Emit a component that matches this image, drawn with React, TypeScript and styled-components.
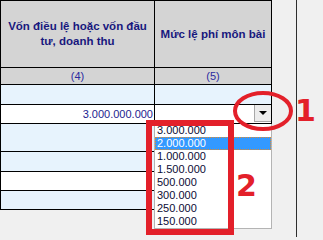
import React from 'react';
import styled, {createGlobalStyle} from 'styled-components';

const GlobalStyle = createGlobalStyle`
  html, body {
    margin: 0;
    padding: 0;
    background: #f0f0f0;
  }

  body {
    font-family: "Liberation Sans", Arial, sans-serif;
    font-size: 11px;
  }
`

const Screen = styled.div`
  position: relative;
  display: flex;
  align-items: flex-start;
  width: 323px;
  height: 237px;
  overflow: hidden;
  background: #f0f0f0;
`

const Sheet = styled.div`
  display: grid;
  grid-template-columns: 153px 116px;
  grid-template-rows: 66px 16px 19px 18px 27px 19px 18px 18px;
  gap: 1px;
  padding: 1px;
  background: #000000;
  flex: none;
`

const Gutter = styled.div`
  width: 24px;
  flex: none;
`

const Divider = styled.div`
  width: 1px;
  height: 237px;
  background: #2e2e2e;
  flex: none;
`

const HeaderCell = styled.div`
  display: flex;
  align-items: center;
  justify-content: center;
  padding: 0 2px;
  background: #d4d4d4;
  color: #18187e;
  font-weight: 700;
  font-size: 11.5px;
  line-height: 15px;
  text-align: center;
  white-space: nowrap;
`

const IndexCell = styled.div`
  display: flex;
  align-items: center;
  justify-content: center;
  background: #d4d4d4;
  color: #2b2ba0;
  font-size: 11px;
`

interface CellProps {
    $tone: 'blue' | 'white';
}

const DataCell = styled.div<CellProps>`
  position: relative;
  display: flex;
  align-items: center;
  justify-content: flex-end;
  padding-right: 1px;
  background: ${(props) => props.$tone === 'blue' ? '#e7f3fd' : '#ffffff'};
  color: #1d1d8f;
  font-size: 11px;
`

const ComboCell = styled(DataCell)`
  align-items: flex-start;
  padding-right: 0;
`

const ComboButton = styled.div`
  display: flex;
  align-items: center;
  justify-content: center;
  width: 16px;
  height: 16px;
  background: #ececec;
  border-left: 1px solid #a8a8a8;
  border-bottom: 1px solid #a8a8a8;
`

const DropList = styled.ul`
  position: absolute;
  top: calc(100% + 1px);
  left: -1px;
  right: -1px;
  margin: 0;
  padding: 0;
  list-style: none;
  background: #ffffff;
  border: 1px solid #b4b4b4;
  border-top: none;
  z-index: 2;
`

const DropItem = styled.li<{ $selected?: boolean }>`
  height: 13px;
  line-height: 13px;
  padding-left: 2px;
  font-size: 11px;
  color: ${(props) => props.$selected ? '#ffffff' : '#0c0c34'};
  background: ${(props) => props.$selected ? '#3399ff' : 'transparent'};
  outline: ${(props) => props.$selected ? '1px dotted #e08a2c' : 'none'};
  outline-offset: -1px;
`

const RingMark = styled.svg`
  position: absolute;
  left: 231px;
  top: 89px;
  z-index: 3;
`

const BoxMark = styled.div`
  position: absolute;
  left: 146px;
  top: 120px;
  width: 88px;
  height: 115px;
  box-sizing: border-box;
  border: 6px solid #e3202a;
  z-index: 3;
`

const Callout = styled.span<{ $left: number; $top: number }>`
  position: absolute;
  left: ${(props) => props.$left}px;
  top: ${(props) => props.$top}px;
  font-family: "DejaVu Sans", Verdana, sans-serif;
  font-weight: 700;
  font-size: 30px;
  line-height: 30px;
  color: #e3202a;
  z-index: 3;
`

const fees = ['3.000.000', '2.000.000', '1.000.000', '1.500.000', '500.000', '300.000', '250.000', '150.000'];

const rows: Array<'blue' | 'white'> = ['blue', 'blue', 'white', 'blue'];

function App() {
    return (
        <>
            <GlobalStyle/>
            <Screen>
                <Sheet>
                    <HeaderCell>Vốn điều lệ hoặc vốn đầu<br/>tư, doanh thu</HeaderCell>
                    <HeaderCell>Mức lệ phí môn bài</HeaderCell>

                    <IndexCell>(4)</IndexCell>
                    <IndexCell>(5)</IndexCell>

                    <DataCell $tone="blue"/>
                    <DataCell $tone="blue"/>

                    <DataCell $tone="white">3.000.000.000</DataCell>
                    <ComboCell $tone="white">
                        <ComboButton>
                            <svg width="8" height="4" viewBox="0 0 8 4">
                                <polygon points="0,0 8,0 4,4" fill="#000000"/>
                            </svg>
                        </ComboButton>
                        <DropList>
                            {fees.map((fee, index) => (
                                <DropItem key={fee} $selected={index === 1}>{fee}</DropItem>
                            ))}
                        </DropList>
                    </ComboCell>

                    {rows.map((tone, index) => (
                        <React.Fragment key={index}>
                            <DataCell $tone={tone}/>
                            <DataCell $tone={tone}/>
                        </React.Fragment>
                    ))}
                </Sheet>
                <Gutter/>
                <Divider/>

                <RingMark width="64" height="44" viewBox="0 0 64 44">
                    <ellipse cx="32" cy="22" rx="28" ry="18" fill="none" stroke="#e3202a" strokeWidth="4"/>
                </RingMark>
                <Callout $left={295} $top={96}>1</Callout>

                <BoxMark/>
                <Callout $left={236} $top={171}>2</Callout>
            </Screen>
        </>
    );
}

export default App;
